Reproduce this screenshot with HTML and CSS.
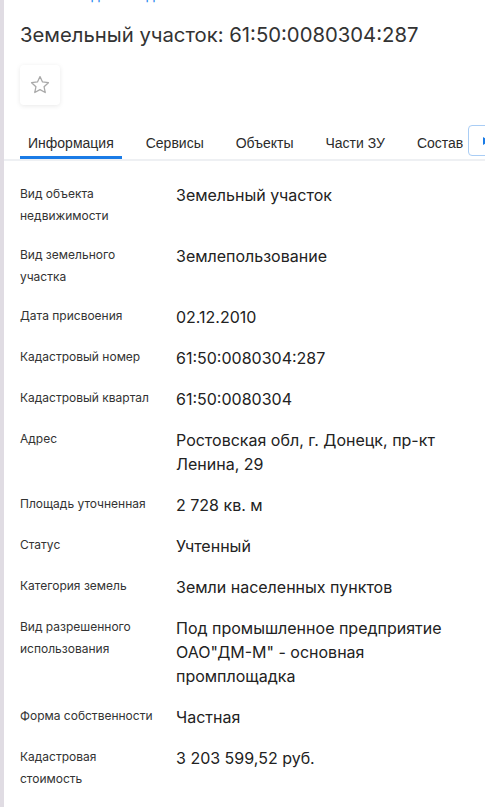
FILE: index.html
```html
<!DOCTYPE html>
<html lang="ru">
<head>
<meta charset="utf-8">
<link rel="stylesheet" href="styles.css">
</head>
<body>
<div class="page">
  <div class="crumbs"><a class="crumb" href="#">Надел · Садовый</a></div>
  <h1 class="title">Земельный участок: 61:50:0080304:287</h1>
  <button class="fav" type="button" aria-label="В избранное">
    <svg width="22" height="22" viewBox="0 0 24 24"><path d="M12 2.8l2.75 5.9 6.45.75-4.78 4.4 1.3 6.36L12 17.05l-5.72 3.16 1.3-6.36-4.78-4.4 6.45-.75z" fill="none" stroke="#a9a9a9" stroke-width="1.4" stroke-linejoin="round"/></svg>
  </button>
  <div class="tabs">
    <span class="tab active">Информация</span>
    <span class="tab">Сервисы</span>
    <span class="tab">Объекты</span>
    <span class="tab">Части ЗУ</span>
    <span class="tab">Состав</span>
    <button class="tab-next" type="button" aria-label="Далее"><svg width="8" height="10" viewBox="0 0 8 10"><path d="M1 1l6 4-6 4z" fill="#1a7be6"/></svg></button>
  </div>
  <dl class="props">
    <div class="row"><dt>Вид объекта недвижимости</dt><dd>Земельный участок</dd></div>
    <div class="row"><dt>Вид земельного участка</dt><dd>Землепользование</dd></div>
    <div class="row"><dt>Дата присвоения</dt><dd>02.12.2010</dd></div>
    <div class="row"><dt>Кадастровый номер</dt><dd>61:50:0080304:287</dd></div>
    <div class="row"><dt>Кадастровый квартал</dt><dd>61:50:0080304</dd></div>
    <div class="row"><dt>Адрес</dt><dd>Ростовская обл, г. Донецк, пр-кт Ленина, 29</dd></div>
    <div class="row"><dt>Площадь уточненная</dt><dd>2 728 кв. м</dd></div>
    <div class="row"><dt>Статус</dt><dd>Учтенный</dd></div>
    <div class="row"><dt>Категория земель</dt><dd>Земли населенных пунктов</dd></div>
    <div class="row"><dt>Вид разрешенного использования</dt><dd>Под промышленное предприятие ОАО"ДМ-М" - основная промплощадка</dd></div>
    <div class="row"><dt>Форма собственности</dt><dd>Частная</dd></div>
    <div class="row"><dt>Кадастровая стоимость</dt><dd>3 203 599,52 руб.</dd></div>
  </dl>
</div>
</body>
</html>
```
FILE: styles.css
```css
* { box-sizing: border-box; }
html, body { margin: 0; padding: 0; background: #fff; }
body { font-family: Inter, "Noto Sans", sans-serif; color: #222; overflow: hidden; }
.page {
  border-left: 4px solid #e0dce3;
  min-height: 807px;
  padding: 0 0 0 16px;
}
.crumbs {
  height: 4px;
  overflow: hidden;
}
.crumb {
  display: block;
  margin: -12.5px 0 0 53px;
  font-size: 14px;
  line-height: 14px;
  color: #2d8cf0;
  text-decoration: none;
  white-space: nowrap;
}
.title {
  margin: 18px 0 0;
  font-size: 20.3px;
  line-height: 26px;
  font-weight: 400;
  color: #333;
}
.fav {
  margin-top: 17px;
  width: 40px;
  height: 40px;
  border: 0;
  border-radius: 4px;
  background: #fff;
  box-shadow: 0 1px 5px rgba(0,0,0,0.09);
  display: flex;
  align-items: center;
  justify-content: center;
  padding: 0;
}
.tabs {
  position: relative;
  margin: 0 0 0 -16px;
  padding-left: 16px;
  display: flex;
  align-items: flex-end;
  border-bottom: 2px solid #eef0f3;
  height: 56px;
  white-space: nowrap;
}
.tab {
  font-family: "Liberation Sans", Arial, sans-serif;
  font-size: 14px;
  line-height: 16px;
  color: #2b2b2b;
  padding: 0 8px 5px;
  margin-right: 16px;
  border-bottom: 3px solid transparent;
  flex: none;
}
.tab.active { border-bottom-color: #1a7be6; }
.tab-next {
  position: absolute;
  top: 20px;
  left: 464px;
  width: 36px;
  height: 31px;
  border: 1px solid #a9cdf5;
  border-radius: 4px;
  background: #fff;
  padding: 0 0 0 13px;
  display: flex;
  align-items: center;
}
.props { margin: 14px 0 0; padding: 0; }
.row {
  display: grid;
  grid-template-columns: 156px 1fr;
  padding: 8px 20px 9px 0;
}
dt {
  font-size: 12px;
  line-height: 22px;
  color: #333;
  padding-right: 22px;
}
dd {
  margin: 0;
  font-size: 16px;
  line-height: 24px;
  color: #222;
}
```
